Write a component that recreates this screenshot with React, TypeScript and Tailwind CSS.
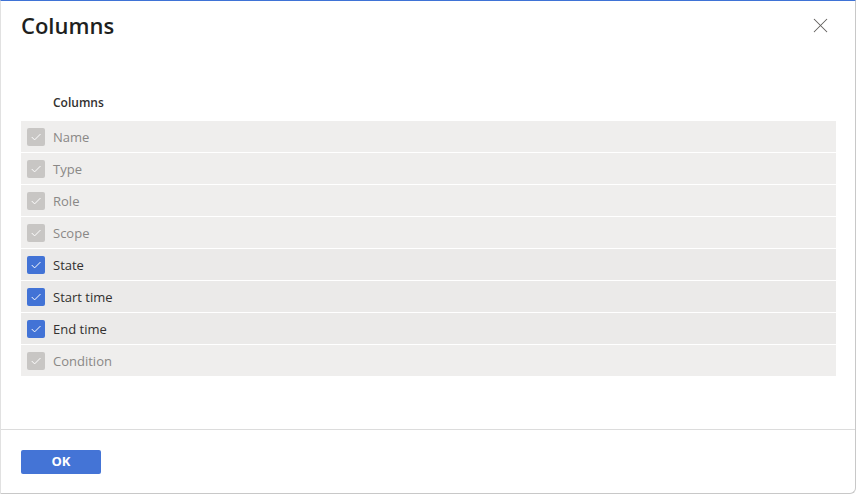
import { X } from "lucide-react";

const font = { fontFamily: '"Segoe UI", "Open Sans", "Noto Sans", sans-serif' };

type Col = { label: string; checked: boolean; disabled: boolean };

const columns: Col[] = [
  { label: "Name", checked: true, disabled: true },
  { label: "Type", checked: true, disabled: true },
  { label: "Role", checked: true, disabled: true },
  { label: "Scope", checked: true, disabled: true },
  { label: "State", checked: true, disabled: false },
  { label: "Start time", checked: true, disabled: false },
  { label: "End time", checked: true, disabled: false },
  { label: "Condition", checked: true, disabled: true },
];

function Check({ disabled }: { disabled: boolean }) {
  return (
    <span
      className={
        "flex h-[18px] w-[18px] shrink-0 items-center justify-center rounded-[2px] " +
        (disabled ? "bg-[#c8c6c4]" : "bg-[#4273d6]")
      }
    >
      <svg width="12" height="12" viewBox="0 0 12 12" fill="none" aria-hidden>
        <path d="M2 6.3l2.6 2.6L10.2 3.3" stroke="white" strokeWidth="1" strokeLinecap="round" strokeLinejoin="round" />
      </svg>
    </span>
  );
}

export default function App() {
  return (
    <div className="h-[495px] w-[857px] overflow-hidden bg-white" style={font}>
      <div className="flex h-[494px] w-[856px] flex-col rounded-br-[6px] border-t border-r border-b border-l border-t-[#3f73d6] border-r-[#c8c8c8] border-b-[#c8c8c8] border-l-[#e1e1e1] bg-white">
        <div className="flex items-start justify-between pl-5 pr-[22px] pt-[9px]">
          <h2 className="text-[22px] font-semibold leading-[30px] text-[#201f1e]">Columns</h2>
          <button className="mt-[3px] text-[#605e5c]" aria-label="Close">
            <X size={25} strokeWidth={1} />
          </button>
        </div>

        <div className="flex-1 px-5 pt-[54px]">
          <div className="pb-[10px] pl-[32px] text-[12px] font-semibold leading-[17px] text-[#323130]">
            Columns
          </div>
          <div className="mr-[-1px] flex flex-col gap-px">
            {columns.map((c) => (
              <div
                key={c.label}
                className={
                  "flex h-[31px] items-center gap-[8px] pl-[6px] " +
                  (c.disabled ? "bg-[#efeeed]" : "bg-[#ebeae9]")
                }
              >
                <Check disabled={c.disabled} />
                <span
                  className={
                    "pt-[2px] text-[13px] leading-none " +
                    (c.disabled ? "text-[#8a8886]" : "text-[#323130]")
                  }
                >
                  {c.label}
                </span>
              </div>
            ))}
          </div>
        </div>

        <div className="h-[64px] border-t border-[#dcdcdc] px-5 pt-[18px]">
          <button className="h-[24px] w-[80px] rounded-[2px] bg-[#4474d6] text-[13px] font-bold text-white">
            OK
          </button>
        </div>
      </div>
    </div>
  );
}
